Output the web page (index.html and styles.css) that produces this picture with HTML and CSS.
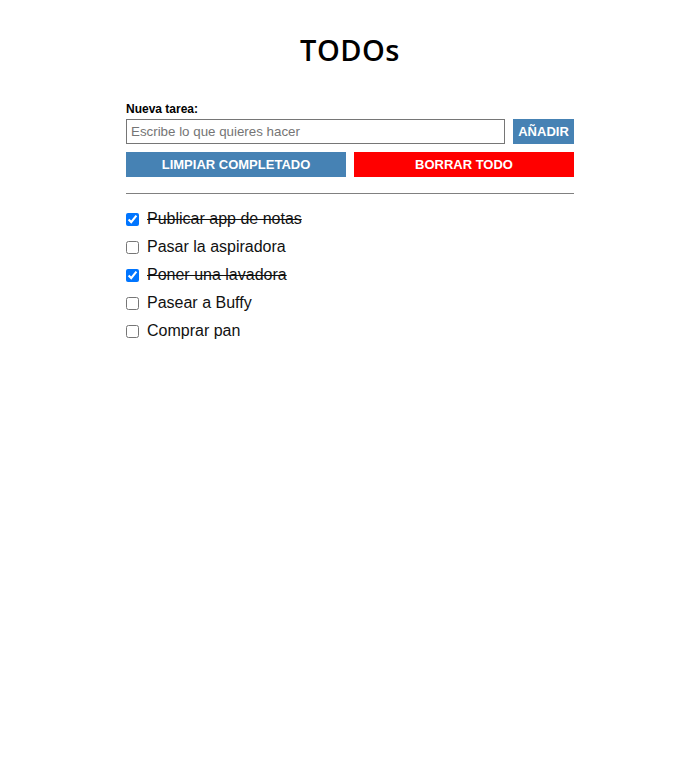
FILE: index.html
```html
<!DOCTYPE html>
<html lang="es">
<head>
<meta charset="utf-8">
<title>TODOs</title>
<link rel="stylesheet" href="styles.css">
</head>
<body>
<main class="app">
  <h1 class="title">TODOs</h1>
  <form class="form">
    <label class="label" for="task">Nueva tarea:</label>
    <div class="add-row">
      <input id="task" class="input" type="text" placeholder="Escribe lo que quieres hacer">
      <button type="button" class="btn btn-blue btn-add">AÑADIR</button>
    </div>
    <div class="actions">
      <button type="button" class="btn btn-blue">LIMPIAR COMPLETADO</button>
      <button type="button" class="btn btn-red">BORRAR TODO</button>
    </div>
  </form>
  <hr class="divider">
  <ul class="list">
    <li class="item done"><input type="checkbox" class="check" checked><span>Publicar app de notas</span></li>
    <li class="item"><input type="checkbox" class="check"><span>Pasar la aspiradora</span></li>
    <li class="item done"><input type="checkbox" class="check" checked><span>Poner una lavadora</span></li>
    <li class="item"><input type="checkbox" class="check"><span>Pasear a Buffy</span></li>
    <li class="item"><input type="checkbox" class="check"><span>Comprar pan</span></li>
  </ul>
</main>
</body>
</html>
```
FILE: styles.css
```css
html, body {
  margin: 0;
  padding: 0;
  background: #fff;
}
body {
  font-family: "Liberation Sans", Arial, sans-serif;
  color: #000;
}
.app {
  width: 448px;
  margin: 0 auto;
  padding-top: 30px;
}
.title {
  margin: 0;
  text-align: center;
  font-family: "Open Sans", "DejaVu Sans", sans-serif;
  font-weight: 600;
  font-size: 29px;
  line-height: 40px;
  letter-spacing: 0.5px;
}
.form {
  margin-top: 32px;
  display: flex;
  flex-direction: column;
}
.label {
  font-size: 12px;
  font-weight: bold;
  line-height: 14px;
  margin-bottom: 3px;
}
.add-row {
  display: flex;
  gap: 8px;
}
.input {
  flex: 1;
  box-sizing: border-box;
  height: 25px;
  margin: 0;
  border: 1px solid #767676;
  padding: 0 4px;
  font-family: "Liberation Sans", Arial, sans-serif;
  font-size: 13.33px;
}
.input::placeholder {
  color: #757575;
}
.btn {
  box-sizing: border-box;
  height: 25px;
  margin: 0;
  border: none;
  padding: 0;
  color: #fff;
  font-family: "Liberation Sans", Arial, sans-serif;
  font-weight: bold;
  font-size: 13px;
}
.btn-blue {
  background: #4682b4;
}
.btn-red {
  background: #ff0000;
}
.btn-add {
  width: 61px;
}
.actions {
  margin-top: 8px;
  display: grid;
  grid-template-columns: 1fr 1fr;
  gap: 8px;
}
.divider {
  margin: 16px 0 0;
  border: none;
  border-top: 1px solid #808080;
  height: 0;
}
.list {
  list-style: none;
  margin: 15px 0 0;
  padding: 0;
  display: flex;
  flex-direction: column;
  gap: 8px;
}
.item {
  display: flex;
  align-items: center;
  gap: 8px;
  height: 20px;
  font-size: 16px;
  color: #111;
}
.check {
  margin: 0;
  width: 13px;
  height: 13px;
}
.done span {
  text-decoration: line-through;
}
```
